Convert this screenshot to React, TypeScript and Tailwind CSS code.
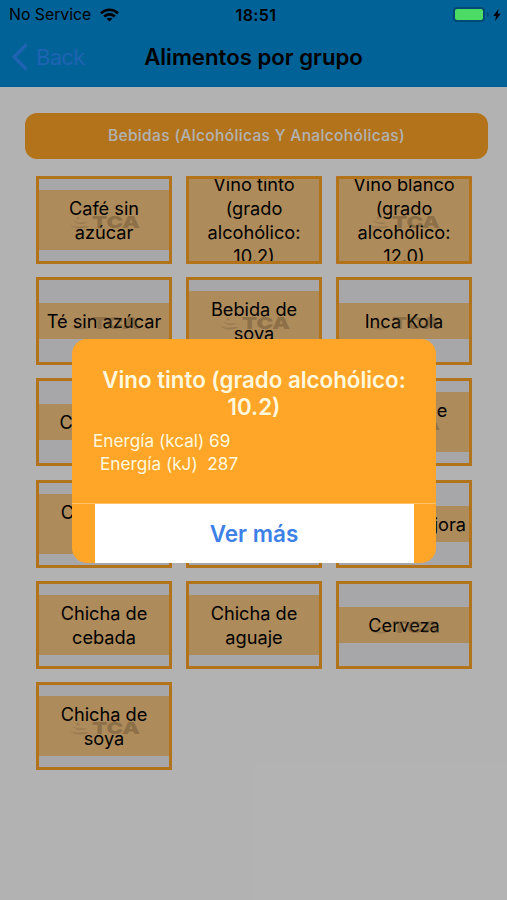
type Food = { name: string; logo?: boolean };

const foods: Food[] = [
  { name: "Café sin azúcar", logo: true },
  { name: "Vino tinto (grado alcohólico: 10.2)" },
  { name: "Vino blanco (grado alcohólico: 12.0)", logo: true },
  { name: "Té sin azúcar", logo: true },
  { name: "Bebida de soya", logo: true },
  { name: "Inca Kola", logo: true },
  { name: "Coca Cola" },
  { name: "Café" },
  { name: "Chicha de maíz", logo: true },
  { name: "Chicha de maní" },
  { name: "Pisco" },
  { name: "Chicha de jora" },
  { name: "Chicha de cebada" },
  { name: "Chicha de aguaje" },
  { name: "Cerveza", logo: true },
  { name: "Chicha de soya", logo: true },
];

const StatusBar = () => (
  <div className="relative z-20 flex h-[29px] items-center justify-between pl-[9px] pr-[6px] text-[16px]">
    <div className="flex flex-1 items-center gap-[9px]">
      <span className="text-[15.8px]">No Service</span>
      <svg width="19" height="14" viewBox="0 0 19 14" fill="none" stroke="currentColor" strokeWidth="2.6">
        <path d="M1 5.2C5.8.6 13.2.6 18 5.2" />
        <path d="M4.2 8.5c3-2.8 7.600-2.8 10.600 0" />
        <path d="M9.500 13.600 6.700 10.800c1.600-1.500 4-1.500 5.600 0z" fill="currentColor" stroke="none" />
      </svg>
    </div>
    <span className="pl-[2px] font-semibold tracking-[0.4px]">18:51</span>
    <div className="flex flex-1 items-center justify-end gap-[2px]">
      <div className="h-[15px] w-[32px] rounded-[4px] border-2 border-[#004a74] bg-[#4cdb64]" />
      <div className="mr-[2px] h-[5px] w-[2px] rounded-r bg-[#004a74]" />
      <svg width="8" height="12" viewBox="0 0 8 12" fill="currentColor">
        <path d="M5.600 0 .2 6.900h3L2 12l5.800-7.200H4.700z" />
      </svg>
    </div>
  </div>
);

const TcaLogo = () => (
  <svg className="absolute left-[30px] top-[33px]" width="72" height="18" viewBox="0 0 72 18" fill="#765a38" opacity="0.35">
    <path d="M1 13c6 3 12 1 19 1-3 3-14 4-19-1zM4 8c4 3 9 3 14 2-3 3-11 3-14-2z" opacity="0.6" />
    <circle cx="9" cy="6" r="1.5" opacity="0.5" />
    <text x="23" y="15.500" fontSize="16.500" fontWeight="900" fontFamily="Inter" textLength="48" lengthAdjust="spacingAndGlyphs">TCA</text>
  </svg>
);

const FoodCard = ({ name, logo }: Food) => (
  <div className="relative flex h-[88px] items-center overflow-hidden border-[3px] border-[#ffa528] bg-[#f0f0f2]">
    <div className="w-full shrink-0 bg-[#ffa528]/55 px-px py-[6px] text-center text-[18.200px] leading-[24px]">
      {name}
    </div>
    {logo && <TcaLogo />}
  </div>
);

export default function App() {
  return (
    <div className="relative h-[900px] w-[507px] overflow-hidden bg-white font-['Inter',sans-serif] text-black">
      <header className="h-[87px] bg-[#008dd9]">
        <StatusBar />
        <div className="grid h-[56px] grid-cols-[1fr_auto_1fr] items-center">
          <div className="flex items-center gap-[8px] pl-[12px] text-[22px] text-[#2d8fff]">
            <svg width="16" height="28" viewBox="0 0 16 28" fill="none" stroke="currentColor" strokeWidth="3.2">
              <path d="M14.500 1.500 2 14l12.500 12.500" />
            </svg>
            <span className="tracking-[-0.7px]">Back</span>
          </div>
          <h1 className="text-[22.200px] font-semibold">Alimentos por grupo</h1>
        </div>
      </header>

      <div className="mx-[25px] mr-[19px] mt-[26px] flex h-[46px] items-center justify-center rounded-[12px] bg-[#ffa528] pb-px text-[15.500px] font-medium tracking-[0.35px] text-white">
        Bebidas (Alcohólicas Y Analcohólicas)
      </div>

      <div className="ml-[36px] mt-[17px] grid grid-cols-[repeat(3,136px)] gap-x-[14px] gap-y-[13.200px]">
        {foods.map((food) => (
          <FoodCard key={food.name} {...food} />
        ))}
      </div>

      <div className="absolute inset-0 z-10 bg-black/30" />

      <div className="absolute left-[72px] top-[339px] z-30 flex h-[224px] w-[364px] flex-col overflow-hidden rounded-[15px] bg-[#ffa528] text-[#fff8dc]">
        <div className="h-[165px] border-b border-[#ffc163] px-[21px] pt-[27px]">
          <h2 className="text-center text-[22.300px] font-semibold leading-[27px]">
            Vino tinto (grado alcohólico: 10.2)
          </h2>
          <div className="mt-[9px] text-[17.200px] leading-[23px]">
            <p>Energía (kcal) 69</p>
            <p className="pl-[7px]">Energía (kJ)&nbsp; 287</p>
          </div>
        </div>
        <button className="mx-auto w-[319px] flex-1 bg-white pt-px text-[22.500px] font-semibold text-[#3c80e8]">
          Ver más
        </button>
      </div>
    </div>
  );
}
